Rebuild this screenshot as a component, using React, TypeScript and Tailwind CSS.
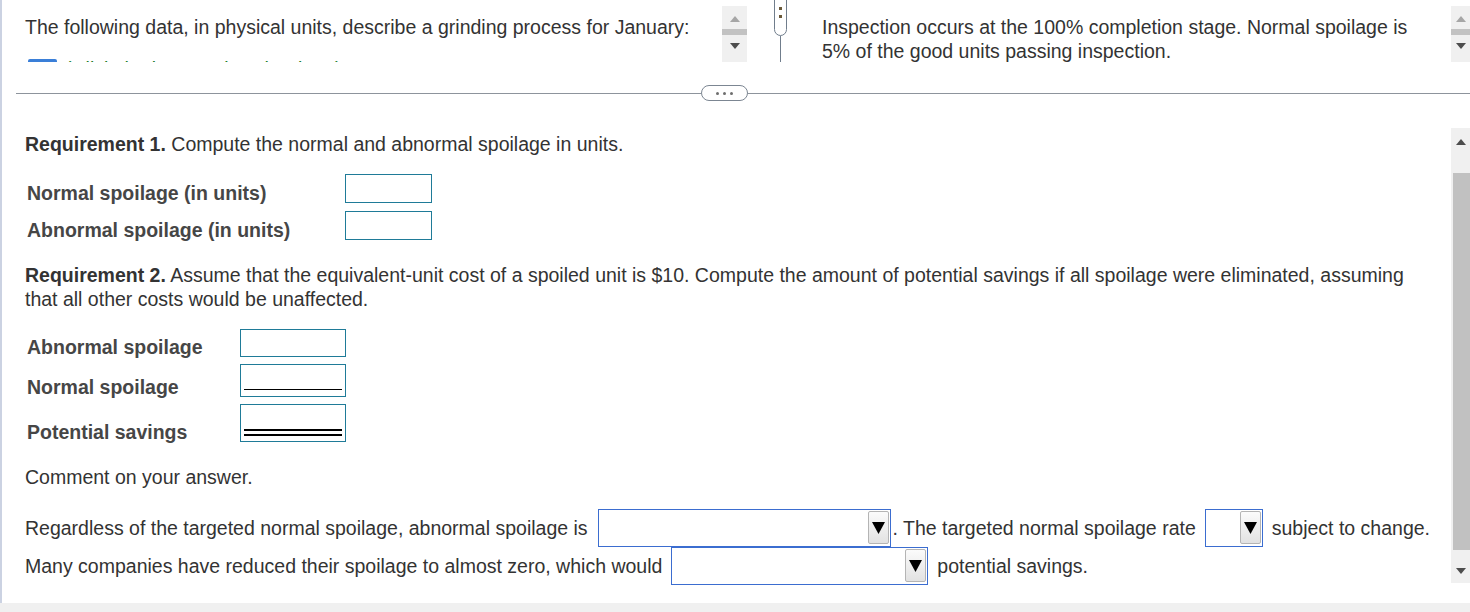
import React from 'react';

function Tri({ up, color }: { up?: boolean; color: string }) {
  return (
    <svg width="10" height="6" viewBox="0 0 10 6">
      <path d={up ? 'M0 6 L5 0 L10 6Z' : 'M0 0 L5 6 L10 0Z'} fill={color} />
    </svg>
  );
}

// small pane scrollbar (top panes)
function MiniScroll({ className }: { className: string }) {
  return (
    <div className={`flex flex-col items-center bg-[#f0f0f0] pt-[10px] ${className}`}>
      <Tri up color="#a6a6a6" />
      <div className="mt-[7px] h-[6px] w-full bg-[#c2c2c2]" />
      <div className="mt-[8px]">
        <Tri color="#4d4d4d" />
      </div>
    </div>
  );
}

function Dropdown({ className }: { className: string }) {
  return (
    <span className={`inline-flex h-[38px] shrink-0 items-start justify-end border border-[#3b6dd0] bg-white ${className}`}>
      <span className="mt-[1px] mr-[1px] flex h-[33px] w-[21px] items-center justify-center rounded-[2px] border border-[#b4b4b4] bg-gradient-to-b from-[#fbfbfb] to-[#e2e2e2]">
        <svg width="13" height="13" viewBox="0 0 13 13">
          <path d="M0 1 L13 1 L6.5 13Z" fill="#000" />
        </svg>
      </span>
    </span>
  );
}

function AnswerBox({ className, lines = 0 }: { className: string; lines?: number }) {
  return (
    <div className={`flex shrink-0 flex-col justify-end border border-[#1f7b98] bg-white px-[3px] ${className}`}>
      {lines === 1 && <div className="mb-[6px] h-px bg-black" />}
      {lines === 2 && (
        <div className="mb-[5px] flex flex-col gap-[3px]">
          <div className="h-[2px] bg-black" />
          <div className="h-[2px] bg-black" />
        </div>
      )}
    </div>
  );
}

export default function App() {
  return (
    <div className="h-[612px] w-[1470px] overflow-hidden bg-white font-['Liberation_Sans',Arial,sans-serif] text-[19.5px] leading-[24px] text-[#333]">
      <div className="flex h-[603px] flex-col border-l-2 border-[#cbd2e2]">
        {/* Top split panes */}
        <div className="flex h-[62px] shrink-0 overflow-hidden">
          <div className="w-[720px] shrink-0 pl-[23px] pt-[15px]">
            <p>The following data, in physical units, describe a grinding process for January:</p>
            <div className="mt-[18px] flex items-start gap-[8px] pl-[3px]">
              <span className="mt-[2px] h-[12px] w-[29px] shrink-0 rounded-[2px] bg-[#3a7fd8]" />
              <span className="whitespace-nowrap text-[#1d7d2a]">(Click the icon to view the data.)</span>
            </div>
          </div>
          <MiniScroll className="mt-[6px] h-[56px] w-[25px] shrink-0" />
          <div className="w-[27px] shrink-0" />
          {/* splitter handle */}
          <div className="flex w-[13px] shrink-0 flex-col items-center">
            <div className="-mt-[6px] flex h-[42px] w-[13px] flex-col items-center justify-end gap-[5px] rounded-b-full border border-[#707d8c] bg-white pb-[17px]">
              <span className="h-[3px] w-[3px] bg-[#6b5a3a]" />
              <span className="h-[3px] w-[3px] bg-[#6b5a3a]" />
            </div>
            <div className="h-[26px] w-px bg-[#707d8c]" />
          </div>
          <div className="w-[664px] shrink-0 pl-[35px] pr-[20px] pt-[15px]">
            <p>
              Inspection occurs at the 100% completion stage. Normal spoilage is 5% of the good units passing
              inspection.
            </p>
          </div>
          <MiniScroll className="mt-[6px] h-[56px] w-[19px] shrink-0" />
        </div>

        {/* Divider */}
        <div className="flex h-[66px] shrink-0 items-center pb-[4px] pl-[14px]">
          <div className="h-px w-[685px] bg-[#8d949c]" />
          <div className="flex h-[16px] w-[47px] items-center justify-center gap-[4px] rounded-full border border-[#7c8692] bg-white">
            <span className="h-[3px] w-[3px] rounded-full bg-[#6e6e6e]" />
            <span className="h-[3px] w-[3px] rounded-full bg-[#6e6e6e]" />
            <span className="h-[3px] w-[3px] rounded-full bg-[#6e6e6e]" />
          </div>
          <div className="h-px flex-1 bg-[#8d949c]" />
        </div>

        {/* Question pane */}
        <div className="flex flex-1">
          <div className="flex-1 pl-[23px] pr-[16px] pt-[4px]">
            <p>
              <b>Requirement 1.</b> Compute the normal and abnormal spoilage in units.
            </p>

            <div className="mt-[18px] flex h-[29px] items-end">
              <span className="-mb-[2px] w-[320px] pl-[2px] font-bold text-[#464646]">Normal spoilage (in units)</span>
              <AnswerBox className="h-[29px] w-[87px]" />
            </div>
            <div className="mt-[8px] flex h-[29px] items-end">
              <span className="-mb-[2px] w-[320px] pl-[2px] font-bold text-[#464646]">Abnormal spoilage (in units)</span>
              <AnswerBox className="h-[29px] w-[87px]" />
            </div>

            <p className="mt-[23px]">
              <b>Requirement 2.</b> Assume that the equivalent-unit cost of a spoiled unit is $10. Compute the amount
              of potential savings if all spoilage were eliminated, assuming that all other costs would be unaffected.
            </p>

            <div className="mt-[18px] flex h-[28px] items-end">
              <span className="-mb-[2px] w-[215px] pl-[2px] font-bold text-[#464646]">Abnormal spoilage</span>
              <AnswerBox className="h-[28px] w-[106px]" />
            </div>
            <div className="mt-[7px] flex h-[33px] items-end">
              <span className="-mb-[2px] w-[215px] pl-[2px] font-bold text-[#464646]">Normal spoilage</span>
              <AnswerBox className="h-[33px] w-[106px]" lines={1} />
            </div>
            <div className="mt-[7px] flex h-[38px] items-end">
              <span className="-mb-[2px] w-[215px] pl-[2px] font-bold text-[#464646]">Potential savings</span>
              <AnswerBox className="h-[38px] w-[106px]" lines={2} />
            </div>

            <p className="mt-[23px]">Comment on your answer.</p>

            <div className="mt-[20px] flex h-[38px] items-center whitespace-nowrap">
              <span>Regardless of the targeted normal spoilage, abnormal spoilage is</span>
              <Dropdown className="ml-[10px] w-[293px]" />
              <span className="ml-[2px]">. The targeted normal spoilage rate</span>
              <Dropdown className="ml-[9px] w-[58px]" />
              <span className="ml-[9px]">subject to change.</span>
            </div>
            <div className="flex h-[38px] items-center whitespace-nowrap">
              <span>Many companies have reduced their spoilage to almost zero, which would</span>
              <Dropdown className="ml-[9px] w-[257px]" />
              <span className="ml-[9px]">potential savings.</span>
            </div>
          </div>

          {/* Pane scrollbar */}
          <div className="flex h-[455px] w-[19px] shrink-0 flex-col items-center bg-[#f0f0f0] pt-[11px]">
            <Tri up color="#4d4d4d" />
            <div className="ml-[2px] mt-[28px] h-[377px] w-[17px] bg-[#c1c1c1]" />
            <div className="mt-[18px]">
              <Tri color="#4d4d4d" />
            </div>
          </div>
        </div>
      </div>
      <div className="h-[9px] bg-[#f0f0f0]" />
    </div>
  );
}
